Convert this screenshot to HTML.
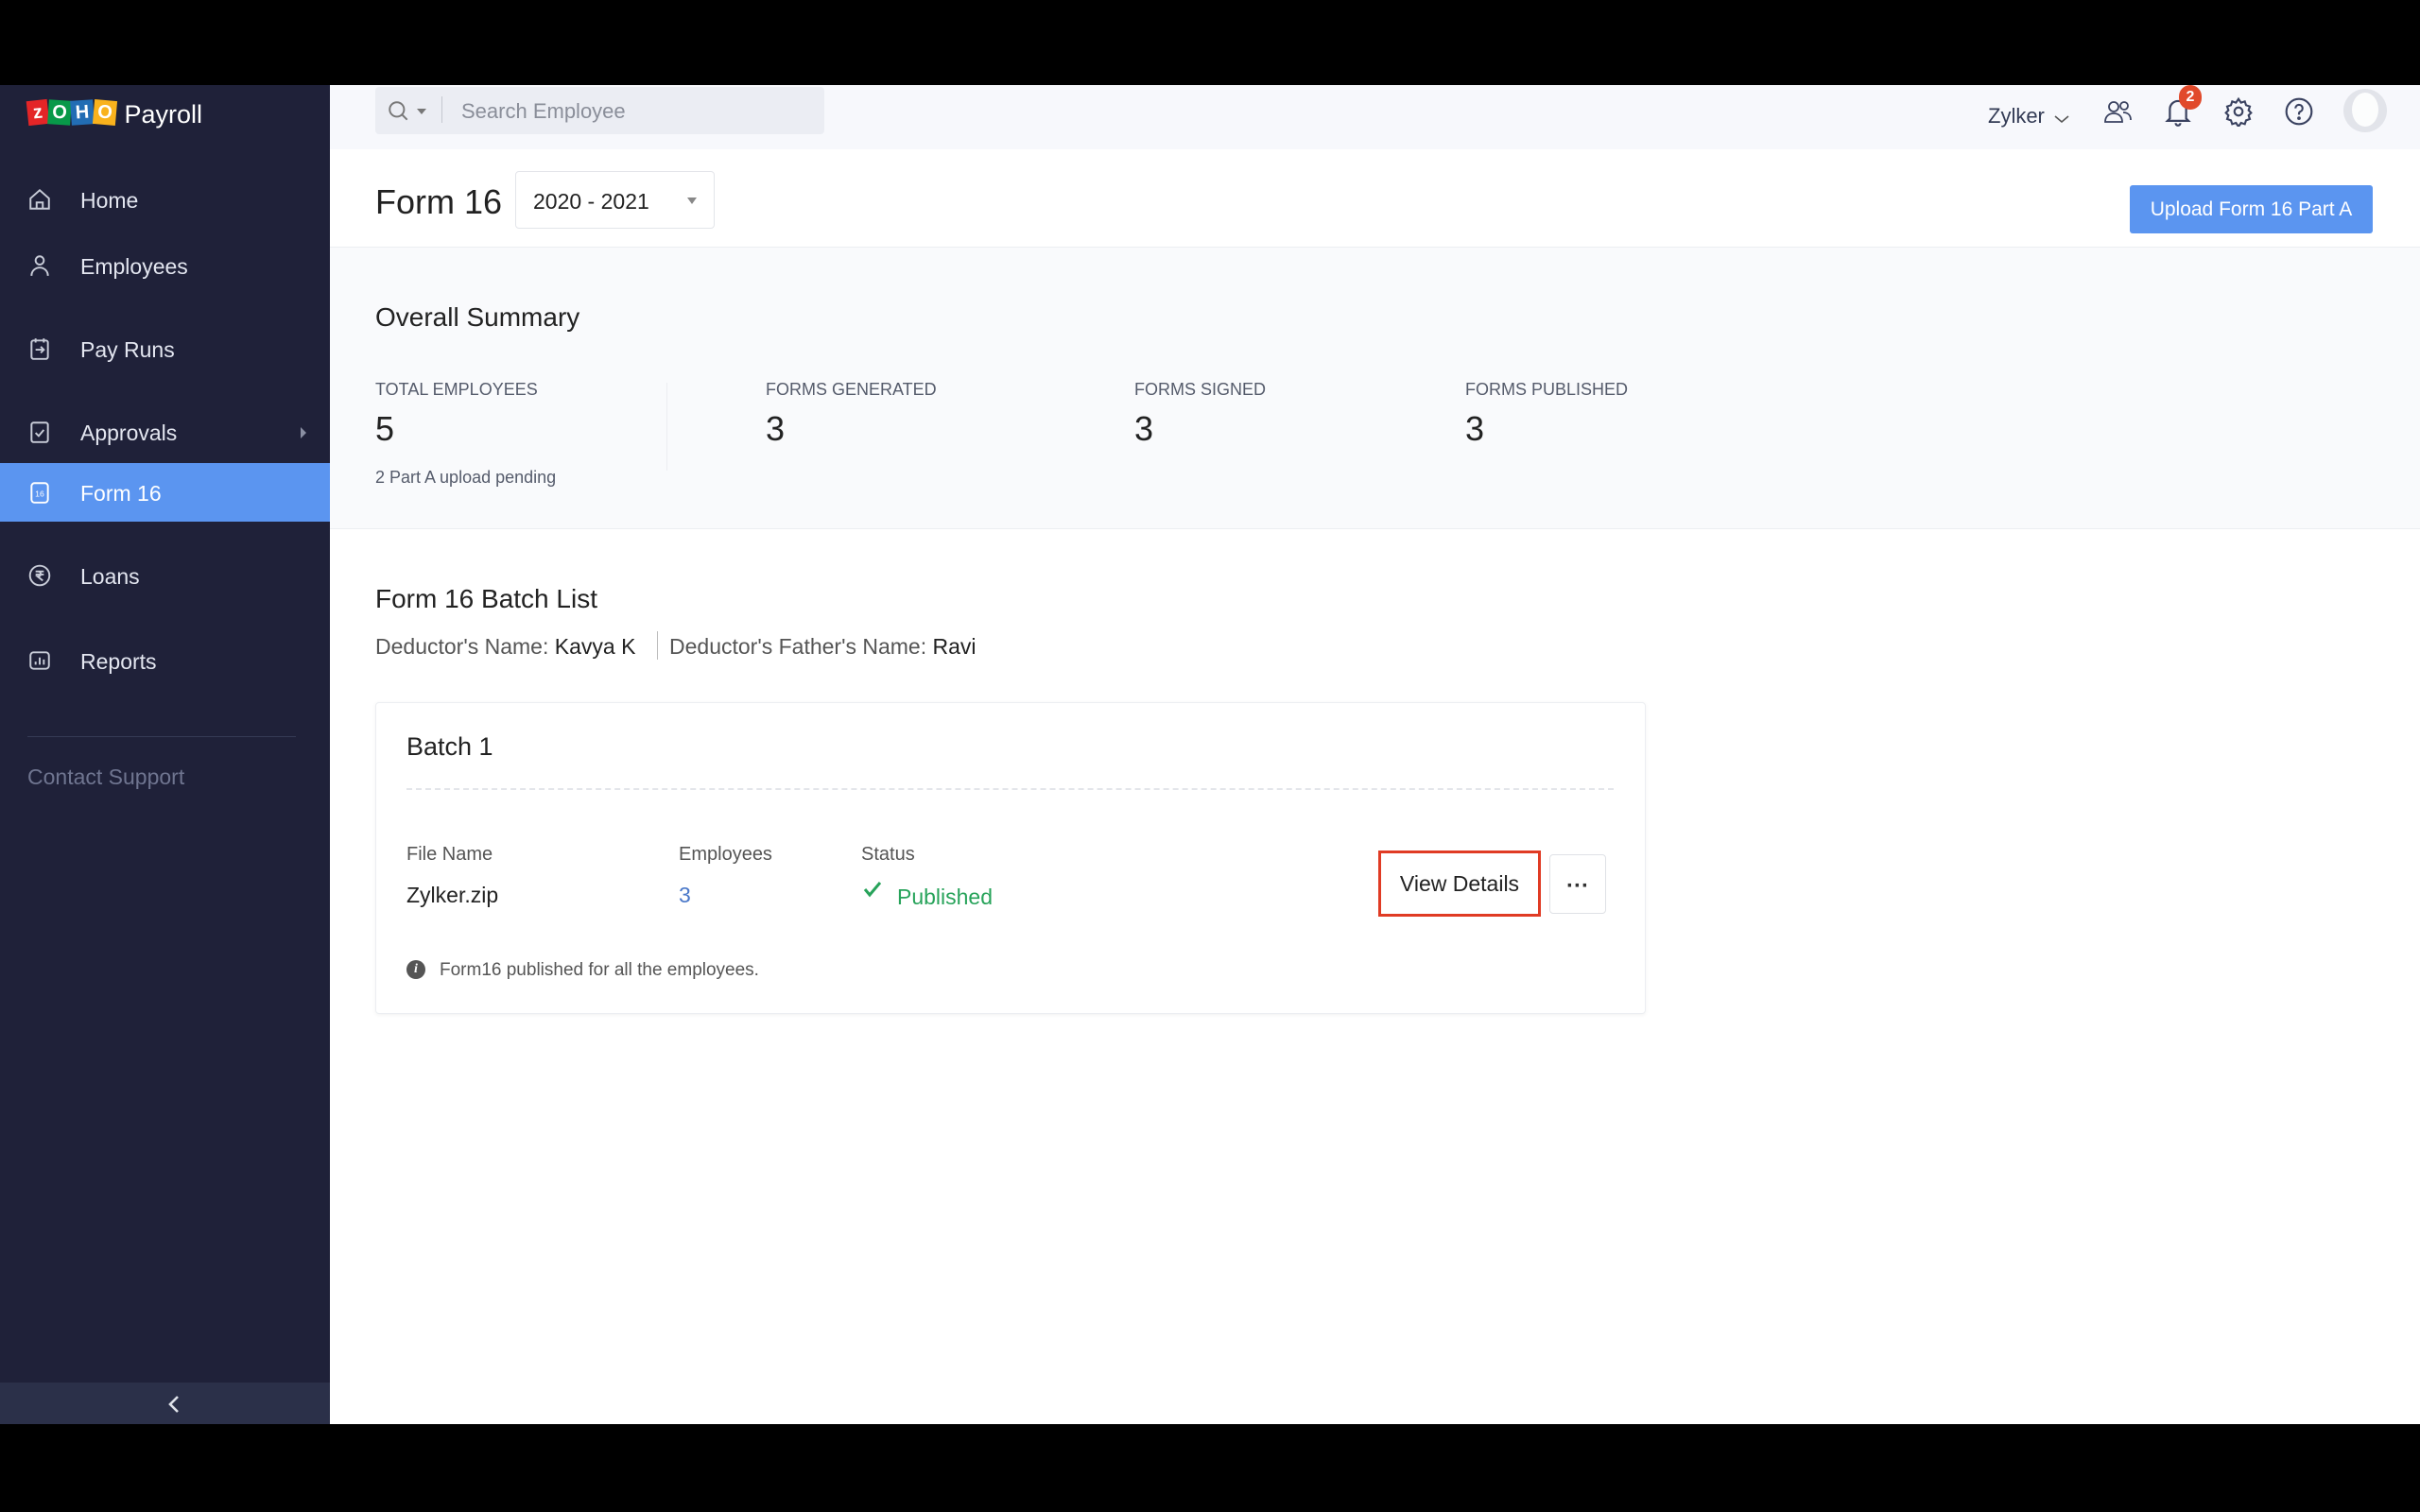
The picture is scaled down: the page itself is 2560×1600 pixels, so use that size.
<!DOCTYPE html>
<html><head><meta charset="utf-8"><style>
*{margin:0;padding:0;box-sizing:border-box}
body{width:2560px;height:1600px;background:#000;position:relative;overflow:hidden;font-family:"Liberation Sans",sans-serif;color:#222}
.a{position:absolute;white-space:nowrap}
#side{position:absolute;left:0;top:90px;width:349px;height:1417px;background:#1f2139}
#main{position:absolute;left:349px;top:90px;width:2211px;height:1417px;background:#fff}
.nav{position:absolute;left:85px;font-size:23px;color:#e3e6f0;line-height:30px}
.ic{position:absolute;left:29px;width:26px;height:26px}
.lbl{font-size:18px;color:#555b6b;line-height:20px}
.num{font-size:36px;color:#222;line-height:40px}
</style></head><body>
<div id="side">
  <div class="a" style="left:29px;top:16px;height:32px;">
    <span style="display:inline-block;width:22px;height:26px;background:#e42527;color:#fff;font-weight:bold;font-size:20px;text-align:center;line-height:26px;transform:rotate(-6deg)">z</span><span style="display:inline-block;width:24px;height:26px;background:#089949;color:#fff;font-weight:bold;font-size:20px;text-align:center;line-height:26px;transform:rotate(4deg)">O</span><span style="display:inline-block;width:24px;height:26px;background:#226db4;color:#fff;font-weight:bold;font-size:20px;text-align:center;line-height:26px;transform:rotate(-4deg)">H</span><span style="display:inline-block;width:24px;height:26px;background:#f9b21d;color:#fff;font-weight:bold;font-size:20px;text-align:center;line-height:26px;transform:rotate(5deg)">O</span>
    <span style="color:#fff;font-size:27px;margin-left:4px;vertical-align:top;line-height:30px">Payroll</span>
  </div>
  <svg class="ic" style="top:108px" viewBox="0 0 24 24" fill="none" stroke="#c8ccd8" stroke-width="1.8"><path d="M3 11 12 3l9 8v10H3z M9 21v-6h6v6"/></svg>
  <div class="nav" style="top:107px">Home</div>
  <svg class="ic" style="top:178px" viewBox="0 0 24 24" fill="none" stroke="#c8ccd8" stroke-width="1.8"><circle cx="12" cy="7" r="4"/><path d="M4 22c0-5 4-8 8-8s8 3 8 8"/></svg>
  <div class="nav" style="top:177px">Employees</div>
  <svg class="ic" style="top:266px" viewBox="0 0 24 24" fill="none" stroke="#c8ccd8" stroke-width="1.8"><rect x="4" y="4" width="16" height="18" rx="2"/><path d="M8 2v4M16 2v4M8 13h8m-3-3 3 3-3 3"/></svg>
  <div class="nav" style="top:265px">Pay Runs</div>
  <svg class="ic" style="top:354px" viewBox="0 0 24 24" fill="none" stroke="#c8ccd8" stroke-width="1.8"><rect x="4" y="3" width="16" height="19" rx="2"/><path d="m8 13 3 3 5-6"/></svg>
  <div class="nav" style="top:353px">Approvals</div>
  <div class="a" style="left:318px;top:362px;width:0;height:0;border-left:6px solid #8a8fa3;border-top:6px solid transparent;border-bottom:6px solid transparent"></div>
  <div class="a" style="left:0;top:400px;width:349px;height:62px;background:#5b95f0"></div>
  <svg class="ic" style="top:418px" viewBox="0 0 24 24" fill="none" stroke="#fff" stroke-width="1.8"><rect x="4" y="3" width="16" height="19" rx="3"/><text x="12" y="16" font-size="8" fill="#fff" stroke="none" text-anchor="middle" font-family="Liberation Sans">16</text></svg>
  <div class="nav" style="top:417px;color:#fff">Form 16</div>
  <svg class="ic" style="top:506px" viewBox="0 0 24 24" fill="none" stroke="#c8ccd8" stroke-width="1.8"><circle cx="12" cy="12" r="9.5"/><path d="M8 8h8M8 11h8M10 8c4 0 4 5 0 5l5 4"/></svg>
  <div class="nav" style="top:505px">Loans</div>
  <svg class="ic" style="top:596px" viewBox="0 0 24 24" fill="none" stroke="#c8ccd8" stroke-width="1.8"><rect x="3" y="4" width="18" height="16" rx="3"/><path d="M8 16v-3M12 16V9M16 16v-5"/></svg>
  <div class="nav" style="top:595px">Reports</div>
  <div class="a" style="left:29px;top:689px;width:284px;height:1px;background:#353a55"></div>
  <div class="a" style="left:29px;top:719px;font-size:23px;color:#6f7590">Contact Support</div>
  <div class="a" style="left:0;top:1373px;width:349px;height:44px;background:#2b3049"></div>
  <svg class="a" style="left:176px;top:1385px" width="16" height="22" viewBox="0 0 16 22" fill="none" stroke="#dfe2ea" stroke-width="2.6"><path d="M12 3 4 11l8 8"/></svg>
</div>
<div id="main">
  <div class="a" style="left:0;top:0;width:2211px;height:68px;background:#f7f8fc"></div>
  <div class="a" style="left:48px;top:2px;width:475px;height:50px;background:#ebedf3;border-radius:4px"></div>
  <svg class="a" style="left:60px;top:15px" width="26" height="26" viewBox="0 0 24 24" fill="none" stroke="#777" stroke-width="1.8"><circle cx="10" cy="10" r="7"/><path d="m15 15 5 5"/></svg>
  <div class="a" style="left:92px;top:25px;border-top:6px solid #777;border-left:5px solid transparent;border-right:5px solid transparent"></div>
  <div class="a" style="left:118px;top:12px;width:1px;height:28px;background:#c5c8d0"></div>
  <div class="a" style="left:139px;top:15px;font-size:22px;color:#8a8e99">Search Employee</div>
  <div class="a" style="left:1754px;top:20px;font-size:22px;color:#333b55">Zylker</div>
  <svg class="a" style="left:1823px;top:30px" width="18" height="12" viewBox="0 0 18 12" fill="none" stroke="#555" stroke-width="1.6"><path d="m2 3 7 6 7-6"/></svg>
  <svg class="a" style="left:1876px;top:14px" width="32" height="28" viewBox="0 0 32 28" fill="none" stroke="#3a4260" stroke-width="1.8"><circle cx="11" cy="9" r="5"/><path d="M2 25c0-6 4-9 9-9s9 3 9 9z"/><circle cx="22" cy="8" r="4"/><path d="M21 15c5 0 8 3 8 8"/></svg>
  <svg class="a" style="left:1940px;top:12px" width="30" height="32" viewBox="0 0 24 26" fill="none" stroke="#3a4260" stroke-width="1.8"><path d="M5 19V11a7 7 0 0 1 14 0v8l2 2H3z M10 23a2 2 0 0 0 4 0"/></svg>
  <div class="a" style="left:1956px;top:0px;width:24px;height:26px;border-radius:12px;background:#e14a2b;color:#fff;font-size:16px;font-weight:bold;text-align:center;line-height:26px">2</div>
  <svg class="a" style="left:2003px;top:12px" width="32" height="32" viewBox="0 0 24 24" fill="none" stroke="#3a4260" stroke-width="1.6"><circle cx="12" cy="12" r="3.2"/><path d="M12 2l2 3 3-1 1 3 3 1-1 3 2 2-2 2 1 3-3 1-1 3-3-1-2 3-2-3-3 1-1-3-3-1 1-3-2-2 2-2-1-3 3-1 1-3 3 1z"/></svg>
  <svg class="a" style="left:2067px;top:12px" width="32" height="32" viewBox="0 0 24 24" fill="none" stroke="#3a4260" stroke-width="1.6"><circle cx="12" cy="12" r="10"/><path d="M9.2 9.5a2.8 2.8 0 1 1 3.8 2.6c-.7.3-1 .8-1 1.6v.8"/><circle cx="12" cy="17.3" r=".6" fill="#3a4260"/></svg>
  <div class="a" style="left:2130px;top:4px;width:46px;height:46px;border-radius:50%;background:#e2e4ea"></div>
  <div class="a" style="left:2139px;top:8px;width:28px;height:36px;border-radius:50%;background:#fff;opacity:.9"></div>

  <div class="a" style="left:48px;top:103px;font-size:36px;color:#222">Form 16</div>
  <div class="a" style="left:196px;top:91px;width:211px;height:61px;border:1px solid #e3e5ea;border-radius:4px;background:#fff"></div>
  <div class="a" style="left:215px;top:110px;font-size:23px;color:#222">2020 - 2021</div>
  <div class="a" style="left:378px;top:119px;border-top:7px solid #888;border-left:5px solid transparent;border-right:5px solid transparent"></div>
  <div class="a" style="left:1904px;top:106px;width:257px;height:51px;background:#5b95f0;border-radius:3px;color:#fff;font-size:21px;text-align:center;line-height:51px">Upload Form 16 Part A</div>
  <div class="a" style="left:0;top:171px;width:2211px;height:299px;background:#f9fafc;border-top:1px solid #eceef2;border-bottom:1px solid #eceef2"></div>
  <div class="a" style="left:48px;top:230px;font-size:28px;color:#222">Overall Summary</div>
  <div class="a lbl" style="left:48px;top:312px">TOTAL EMPLOYEES</div>
  <div class="a num" style="left:48px;top:344px">5</div>
  <div class="a" style="left:48px;top:405px;font-size:18px;color:#555b6b">2 Part A upload pending</div>
  <div class="a" style="left:356px;top:315px;width:1px;height:93px;background:#eceef2"></div>
  <div class="a lbl" style="left:461px;top:312px">FORMS GENERATED</div>
  <div class="a num" style="left:461px;top:344px">3</div>
  <div class="a lbl" style="left:851px;top:312px">FORMS SIGNED</div>
  <div class="a num" style="left:851px;top:344px">3</div>
  <div class="a lbl" style="left:1201px;top:312px">FORMS PUBLISHED</div>
  <div class="a num" style="left:1201px;top:344px">3</div>

  <div class="a" style="left:48px;top:528px;font-size:28px;color:#222">Form 16 Batch List</div>
  <div class="a" style="left:48px;top:581px;font-size:23px;color:#555">Deductor's Name: <span style="color:#222">Kavya K</span></div>
  <div class="a" style="left:346px;top:578px;width:1px;height:30px;background:#bbb"></div>
  <div class="a" style="left:359px;top:581px;font-size:23px;color:#555">Deductor's Father's Name: <span style="color:#222">Ravi</span></div>

  <div class="a" style="left:48px;top:653px;width:1344px;height:330px;background:#fff;border:1px solid #eceef2;border-radius:4px;box-shadow:0 1px 4px rgba(0,0,0,.06)"></div>
  <div class="a" style="left:81px;top:685px;font-size:27px;color:#222">Batch 1</div>
  <div class="a" style="left:81px;top:744px;width:1277px;border-top:2px dashed #e3e5ea"></div>
  <div class="a" style="left:81px;top:803px;font-size:20px;color:#555">File Name</div>
  <div class="a" style="left:369px;top:803px;font-size:20px;color:#555">Employees</div>
  <div class="a" style="left:562px;top:803px;font-size:20px;color:#555">Status</div>
  <div class="a" style="left:81px;top:844px;font-size:23px;color:#222">Zylker.zip</div>
  <div class="a" style="left:369px;top:844px;font-size:23px;color:#4a78c9">3</div>
  <svg class="a" style="left:563px;top:840px" width="22" height="22" viewBox="0 0 22 22" fill="none" stroke="#27a35a" stroke-width="3"><path d="m3 11 5 6L19 4"/></svg>
  <div class="a" style="left:600px;top:846px;font-size:23px;color:#27a35a">Published</div>
  <div class="a" style="left:1109px;top:810px;width:172px;height:70px;border:3px solid #e03b24;background:#fff;font-size:23px;color:#222;text-align:center;line-height:64px">View Details</div>
  <div class="a" style="left:1290px;top:814px;width:60px;height:63px;border:1px solid #dfe1e6;border-radius:4px;background:#fff;font-size:24px;font-weight:bold;text-align:center;line-height:66px;color:#333">···</div>
  <div class="a" style="left:81px;top:926px;width:20px;height:20px;border-radius:50%;background:#555;color:#fff;font-size:14px;font-weight:bold;text-align:center;line-height:20px;font-family:'Liberation Serif',serif;font-style:italic">i</div>
  <div class="a" style="left:116px;top:926px;font-size:19px;color:#555">Form16 published for all the employees.</div>
</div>
</body></html>
